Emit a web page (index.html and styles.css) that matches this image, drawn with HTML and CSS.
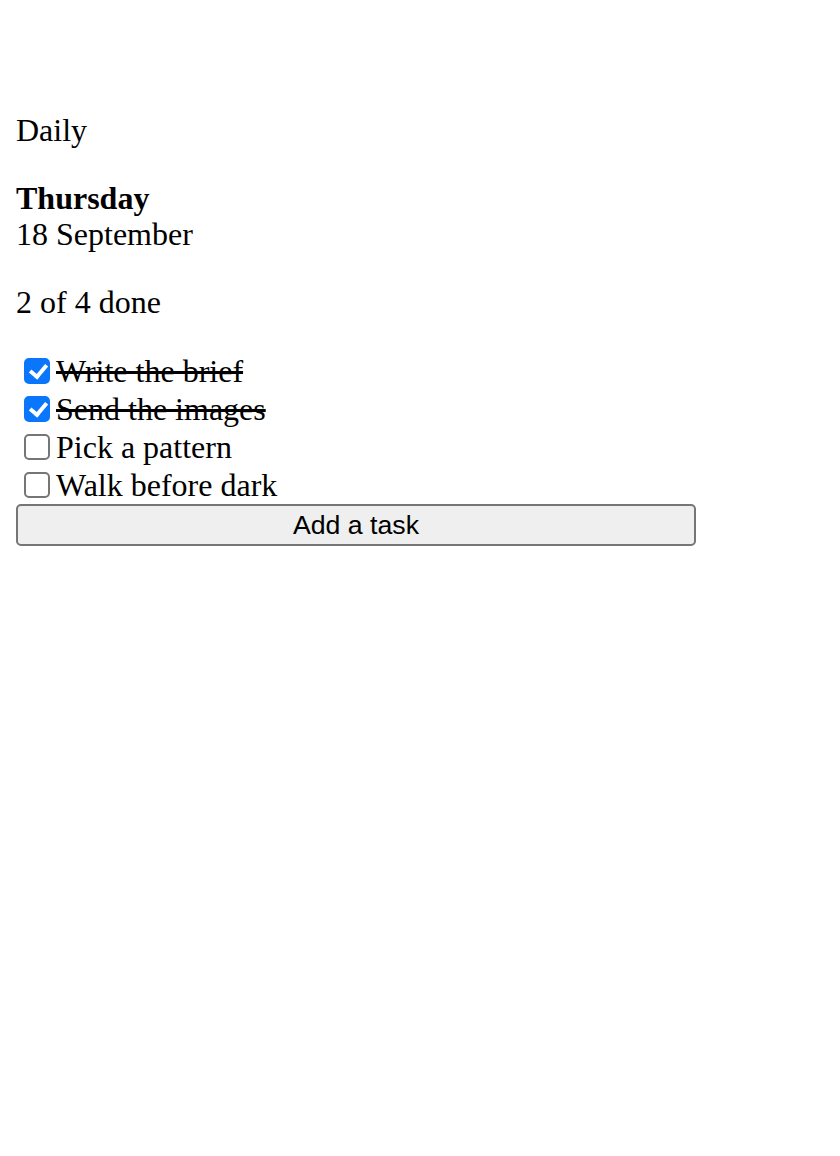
FILE: index.html
```html
<!DOCTYPE html>
<html lang="en">
<head>
<meta charset="utf-8">
<title>Daily</title>
<link rel="stylesheet" href="styles.css">
</head>
<body>
<main class="app">
  <p class="app-title">Daily</p>
  <p class="date"><strong class="weekday">Thursday</strong><br>18 September</p>
  <p class="progress">2 of 4 done</p>
  <ul class="tasks">
    <li class="task"><label class="task-label"><input class="task-check" type="checkbox" checked><span class="task-text done">Write the brief</span></label></li>
    <li class="task"><label class="task-label"><input class="task-check" type="checkbox" checked><span class="task-text done">Send the images</span></label></li>
    <li class="task"><label class="task-label"><input class="task-check" type="checkbox"><span class="task-text">Pick a pattern</span></label></li>
    <li class="task"><label class="task-label"><input class="task-check" type="checkbox"><span class="task-text">Walk before dark</span></label></li>
  </ul>
  <button class="add-btn" type="button">Add a task</button>
</main>
</body>
</html>
```
FILE: styles.css
```css
html, body {
  margin: 0;
  padding: 0;
  background: #ffffff;
}

body {
  padding: 16px;
  font-family: "Liberation Serif", "Times New Roman", serif;
  font-size: 32px;
  line-height: 36px;
  color: #000000;
}

.app {
  padding-top: 64px;
}

.app p {
  margin: 32px 0;
}

.weekday {
  font-weight: bold;
}

.tasks {
  list-style: none;
  margin: 30px 0 0;
  padding: 0;
}

.task {
  display: flex;
  height: 38px;
  align-items: center;
}

.task-label {
  display: flex;
  align-items: center;
}

.task-check {
  -webkit-appearance: none;
  appearance: none;
  position: relative;
  box-sizing: border-box;
  width: 26px;
  height: 26px;
  margin: 6px 6px 6px 8px;
  flex: none;
  border: 2px solid #767676;
  border-radius: 5px;
  background: #ffffff;
}

.task-check:checked {
  border-color: #0a76fb;
  background: #0a76fb;
}

.task-check:checked::after {
  content: "";
  position: absolute;
  left: 7px;
  top: 1px;
  width: 7px;
  height: 13px;
  border: solid #ffffff;
  border-width: 0 4px 4px 0;
  transform: rotate(40deg);
}

.task-text.done {
  text-decoration: line-through;
}

.add-btn {
  display: block;
  width: 680px;
  height: 42px;
  margin: 0;
  padding: 0 12px;
  font-family: "Liberation Sans", Arial, sans-serif;
  font-size: 26.67px;
  color: #000000;
  background: #efefef;
  border: 2px solid #767676;
  border-radius: 5px;
}
```
